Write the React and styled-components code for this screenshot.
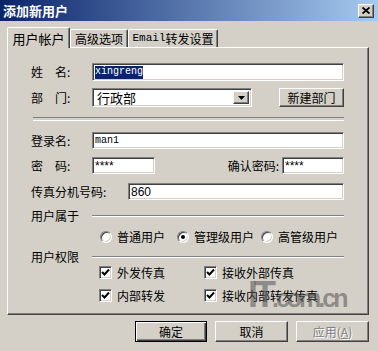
import React from 'react';
import styled, {createGlobalStyle} from 'styled-components';

const GlobalStyle = createGlobalStyle`
  html, body {
    margin: 0;
    padding: 0;
    background: #d4d0c8;
  }
  body {
    font-family: "Noto Sans CJK SC", "DejaVu Sans", sans-serif;
    font-size: 12px;
    color: #000;
  }
`;

const Window = styled.div`
  width: 378px;
  height: 351px;
  box-sizing: border-box;
  background: #d4d0c8;
  display: flex;
  flex-direction: column;
  overflow: hidden;
  position: relative;
`;

const TitleBar = styled.div`
  height: 21px;
  flex: none;
  display: flex;
  align-items: center;
  justify-content: space-between;
  padding: 0 4px 0 3px;
  background: linear-gradient(to right, #0a246a, #a6caf0);
  color: #fff;
  font-weight: bold;
  font-size: 13px;
  line-height: 1;
`;

const CloseButton = styled.div`
  width: 16px;
  height: 14px;
  box-sizing: border-box;
  background: #d4d0c8;
  border: 1px solid;
  border-color: #fff #404040 #404040 #fff;
  box-shadow: inset -1px -1px 0 #808080;
  display: flex;
  align-items: center;
  justify-content: center;
`;

const Content = styled.div`
  padding: 6px 9px 0 7px;
  display: flex;
  flex-direction: column;
`;

const TabRow = styled.div`
  display: flex;
  align-items: flex-end;
  height: 20px;
  position: relative;
  z-index: 1;
`;

const Tab = styled.div`
  height: ${p => (p.$active ? 21 : 18)}px;
  width: ${p => p.$w}px;
  box-sizing: border-box;
  display: flex;
  align-items: center;
  justify-content: center;
  background: #d4d0c8;
  border-top: 1px solid #fff;
  border-left: 1px solid #fff;
  border-right: 1px solid #404040;
  box-shadow: inset -1px 0 0 #808080;
  border-radius: 2px 2px 0 0;
  margin-bottom: ${p => (p.$active ? -1 : 0)}px;
  padding-top: ${p => (p.$active ? 1 : 0)}px;
  font-size: ${p => (p.$active ? 13 : 12)}px;
  line-height: 1;
  white-space: nowrap;
`;

const Mono = styled.span`
  font-family: "Liberation Mono", "DejaVu Sans Mono", monospace;
  font-size: ${p => p.$size || 11}px;
`;

const Panel = styled.div`
  height: 268px;
  box-sizing: border-box;
  border: 1px solid;
  border-color: #fff #404040 #404040 #fff;
  box-shadow: inset -1px -1px 0 #808080;
  padding: 15px 24px 0 23px;
  display: flex;
  flex-direction: column;
`;

const Row = styled.div`
  display: flex;
  align-items: center;
  flex: none;
  height: ${p => p.$h || 17}px;
  margin-top: ${p => p.$mt || 0}px;
  padding-left: ${p => p.$pl || 0}px;
`;

const Label = styled.span`
  width: ${p => (p.$w ? `${p.$w}px` : 'auto')};
  flex: none;
  white-space: pre;
  line-height: 1;
  margin-left: ${p => (p.$push ? 'auto' : '0')};
  padding-right: ${p => p.$pr || 0}px;
`;

const sunken = `
  box-sizing: border-box;
  border: 1px solid;
  border-color: #808080 #fff #fff #808080;
  box-shadow: inset 1px 1px 0 #404040, inset -1px -1px 0 #d4d0c8;
`;

const raised = `
  box-sizing: border-box;
  background: #d4d0c8;
  border: 1px solid;
  border-color: #fff #404040 #404040 #fff;
  box-shadow: inset -1px -1px 0 #808080;
`;

const TextField = styled.div`
  ${sunken};
  background: #fff;
  flex: ${p => (p.$w ? 'none' : 1)};
  width: ${p => (p.$w ? `${p.$w}px` : 'auto')};
  height: 100%;
  padding-left: 2px;
  display: flex;
  align-items: center;
  line-height: 1;
  font-family: ${p => (p.$mono ? '"Liberation Mono", monospace' : '"Liberation Sans", Arial, sans-serif')};
  font-size: ${p => (p.$mono ? 10 : 12)}px;
  white-space: nowrap;
`;

const Selected = styled.span`
  background: #0a246a;
  color: #fff;
  padding: 1px 0 2px;
`;

const Select = styled.div`
  ${sunken};
  background: #fff;
  width: 160px;
  height: 100%;
  display: flex;
  align-items: stretch;
  padding: 2px;
`;

const SelectText = styled.span`
  flex: 1;
  display: flex;
  align-items: center;
  padding-left: 2px;
  line-height: 1;
  font-size: 13px;
`;

const DropButton = styled.div`
  ${raised};
  width: 16px;
  display: flex;
  align-items: center;
  justify-content: center;
`;

const Button = styled.div`
  ${raised};
  width: ${p => p.$w || 73}px;
  height: 100%;
  display: flex;
  align-items: center;
  justify-content: center;
  line-height: 1;
  margin-left: ${p => (p.$push ? 'auto' : '0')};
  color: ${p => (p.$disabled ? '#808080' : '#000')};
  text-shadow: ${p => (p.$disabled ? '1px 1px 0 #fff' : 'none')};
  ${p => p.$default && `
    border: 1px solid #000;
    box-shadow: inset 1px 1px 0 #fff, inset -1px -1px 0 #404040, inset -2px -2px 0 #808080;
  `}
`;

const Separator = styled.div`
  height: 2px;
  flex: none;
  margin: 10px 0 0 2px;
  border-top: 1px solid #808080;
  border-bottom: 1px solid #fff;
`;

const GroupLine = styled.div`
  flex: 1;
  height: 0;
  border-top: 1px solid #808080;
  border-bottom: 1px solid #fff;
`;

const Option = styled.label`
  display: flex;
  align-items: center;
  gap: 5px;
  width: ${p => (p.$w ? `${p.$w}px` : 'auto')};
  flex: none;
  line-height: 1;
  white-space: nowrap;
`;

const RadioDot = styled.span`
  width: 12px;
  height: 12px;
  box-sizing: border-box;
  border-radius: 50%;
  border: 1px solid;
  border-color: #808080 #fff #fff #808080;
  box-shadow: inset 1px 1px 0 #404040, inset -1px -1px 0 #d4d0c8;
  background: #fff;
  display: flex;
  align-items: center;
  justify-content: center;
  flex: none;
  &::after {
    content: "";
    width: 4px;
    height: 4px;
    border-radius: 50%;
    background: ${p => (p.$checked ? '#000' : 'transparent')};
  }
`;

const CheckBox = styled.span`
  ${sunken};
  width: 13px;
  height: 13px;
  background: #fff;
  display: flex;
  align-items: center;
  justify-content: center;
  flex: none;
`;

const CheckGrid = styled.div`
  display: grid;
  grid-template-columns: 105px auto;
  padding-left: 68px;
  flex: none;
  margin-top: ${p => p.$mt || 0}px;
  height: 13px;
  align-items: center;
`;

const ButtonRow = styled.div`
  display: flex;
  justify-content: flex-end;
  gap: 8px;
  height: 21px;
  margin: 6px 0 0 0;
`;

const Watermark = styled.div`
  position: absolute;
  left: 248px;
  top: 277px;
  display: flex;
  align-items: baseline;
  font-family: "Liberation Sans", Arial, sans-serif;
  font-weight: bold;
  font-size: 25px;
  letter-spacing: -3px;
  color: rgba(80, 80, 80, 0.55);
  pointer-events: none;
  line-height: 1;
`;

const Big = styled.span`
  font-size: 36px;
  letter-spacing: -4px;
`;

function Check() {
  return (
    <CheckBox>
      <svg width="9" height="9" viewBox="0 0 9 9">
        <polyline points="1,4 3.5,6.5 8,1.5" fill="none" stroke="#000" strokeWidth="2"/>
      </svg>
    </CheckBox>
  );
}

const users = [
  {label: '普通用户', w: 77, checked: false},
  {label: '管理级用户', w: 84, checked: true},
  {label: '高管级用户', checked: false},
];

export default function App() {
  return (
    <Window>
      <GlobalStyle/>
      <TitleBar>
        <span>添加新用户</span>
        <CloseButton>
          <svg width="8" height="7" viewBox="0 0 8 7">
            <path d="M0.5 0.5 L7.5 6.5 M7.5 0.5 L0.5 6.5" stroke="#000" strokeWidth="1.8"/>
          </svg>
        </CloseButton>
      </TitleBar>
      <Content>
        <TabRow>
          <Tab $active $w={63}>用户帐户</Tab>
          <Tab $w={58}>高级选项</Tab>
          <Tab $w={90}><Mono>Email</Mono>转发设置</Tab>
        </TabRow>
        <Panel>
          <Row $h={18}>
            <Label $w={61}>姓　名:</Label>
            <TextField $mono><Selected>xingreng</Selected></TextField>
          </Row>
          <Row $h={19} $mt={7}>
            <Label $w={61}>部　门:</Label>
            <Select>
              <SelectText>行政部</SelectText>
              <DropButton>
                <svg width="7" height="4" viewBox="0 0 7 4">
                  <path d="M0 0 H7 L3.5 4 Z" fill="#000"/>
                </svg>
              </DropButton>
            </Select>
            <Button $push $w={65}>新建部门</Button>
          </Row>
          <Separator/>
          <Row $mt={11}>
            <Label $w={61}>登录名:</Label>
            <TextField $mono>man1</TextField>
          </Row>
          <Row $mt={8}>
            <Label $w={61}>密　码:</Label>
            <TextField $w={63}>****</TextField>
            <Label $push $pr={3}>确认密码:</Label>
            <TextField $w={62}>****</TextField>
          </Row>
          <Row $mt={9}>
            <Label $w={97}>传真分机号码:</Label>
            <TextField>860</TextField>
          </Row>
          <Row $h={14} $mt={9}>
            <Label $w={61}>用户属于</Label>
            <GroupLine/>
          </Row>
          <Row $h={13} $mt={7} $pl={69}>
            {users.map(u => (
              <Option key={u.label} $w={u.w}>
                <RadioDot $checked={u.checked}/>
                {u.label}
              </Option>
            ))}
          </Row>
          <Row $h={14} $mt={7}>
            <Label $w={61}>用户权限</Label>
            <GroupLine/>
          </Row>
          <CheckGrid $mt={2}>
            <Option><Check/>外发传真</Option>
            <Option><Check/>接收外部传真</Option>
          </CheckGrid>
          <CheckGrid $mt={10}>
            <Option><Check/>内部转发</Option>
            <Option><Check/>接收内部转发传真</Option>
          </CheckGrid>
        </Panel>
        <ButtonRow>
          <Button $default $w={72}>确定</Button>
          <Button>取消</Button>
          <Button $disabled>应用(<u>A</u>)</Button>
        </ButtonRow>
      </Content>
      <Watermark><Big>IT</Big>.com.cn</Watermark>
    </Window>
  );
}
